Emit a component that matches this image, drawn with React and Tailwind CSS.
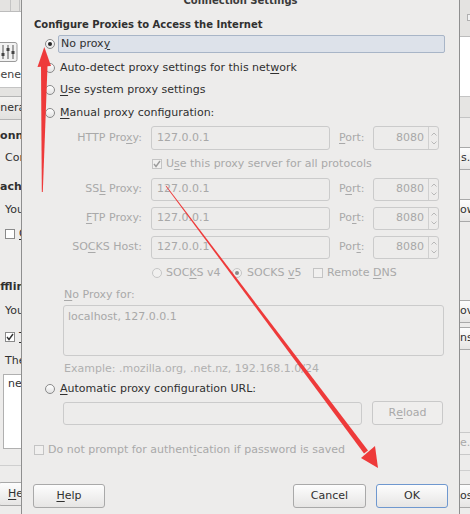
import React from 'react';

// mnemonic underline, like GTK labels
const U = ({ children }) => <span className="underline underline-offset-[2px]">{children}</span>;

const Radio = ({ checked, disabled }) => (
  <span
    className={`w-[10px] h-[10px] rounded-full border flex items-center justify-center shrink-0 ${
      disabled ? 'border-[#c6c6c6] bg-[#f1f0ef]' : 'border-[#8a8a8a] bg-linear-to-b from-white to-[#e2e2e2]'
    }`}
  >
    {checked && <span className={`w-[4px] h-[4px] rounded-full ${disabled ? 'bg-[#8c8c8c]' : 'bg-[#262626]'}`} />}
  </span>
);

const Checkbox = ({ checked, disabled }) => (
  <span
    className={`w-[10px] h-[10px] border flex items-center justify-center shrink-0 ${
      disabled ? 'border-[#c4c4c4] bg-[#f1f0ef]' : 'border-[#8a8a8a] bg-white'
    }`}
  >
    {checked && (
      <svg width="8" height="8" viewBox="0 0 8 8">
        <path d="M1 4 L3 6.5 L7 1" fill="none" stroke={disabled ? '#9c9c9c' : '#333'} strokeWidth="1.4" />
      </svg>
    )}
  </span>
);

const Spin = ({ className = 'h-[23px]' }) => (
  <div className={`w-[66px] border border-[#cbcbcb] rounded-[3px] flex text-[#a8a8a8] ${className}`}>
    <div className="flex-1 flex items-center justify-end pr-[4px]">8080</div>
    <div className="w-[10px] border-l border-[#d0d0d0] flex flex-col items-center justify-center gap-[5px]">
      <svg width="6" height="4" viewBox="0 0 6 4">
        <path d="M0.5 3.5 L3 1 L5.5 3.5" stroke="#b8b8b8" fill="none" />
      </svg>
      <svg width="6" height="4" viewBox="0 0 6 4">
        <path d="M0.5 0.5 L3 3 L5.5 0.5" stroke="#b8b8b8" fill="none" />
      </svg>
    </div>
  </div>
);

const ProxyRow = ({ label, port, className = '', h = 'h-[23px]' }) => (
  <div className={`flex items-center ${h} ${className}`}>
    <div className="w-[120px] text-right text-[#a9a9a9] whitespace-nowrap">{label}</div>
    <div className="ml-[9px] w-[179px] h-full border border-[#cbcbcb] rounded-[3px] pl-[5px] flex items-center text-[#a8a8a8]">
      127.0.0.1
    </div>
    <div className="ml-[9px] w-[34px] text-[#a9a9a9]">{port}</div>
    <Spin className="h-full" />
  </div>
);

const Button = ({ children, className = '', disabled, focus }) => (
  <div
    className={`h-[24px] rounded-[3px] border flex items-center justify-center ${
      disabled
        ? 'border-[#c9c9c9] bg-[#efeeed] text-[#a9a9a9]'
        : focus
        ? 'border-[#6f98cf] bg-linear-to-b from-[#fdfdfd] to-[#e6e5e4]'
        : 'border-[#a9a9a9] bg-linear-to-b from-[#fdfdfd] to-[#e6e5e4]'
    } ${className}`}
  >
    {children}
  </div>
);

const LeftStrip = () => (
  <div className="w-[21px] h-[514px] overflow-hidden flex flex-col shrink-0 bg-[#edeceb]">
    <div className="h-[12px] bg-[#e4e3e1] border-b border-[#bcbcbc] flex shrink-0">
      <div className="ml-[10px] w-[1px] bg-[#c4c4c4]" />
      <div className="ml-[8px] w-[1px] bg-[#c4c4c4]" />
    </div>
    <div className="h-[76px] bg-white border-b border-[#c4c4c4] flex flex-col shrink-0">
      <div className="mt-[30px] h-[20px]">
        <svg width="18" height="20" viewBox="0 0 18 20">
          <rect x="-3" y="0.5" width="20" height="19" rx="2" fill="#f2f2f2" stroke="#9a9a9a" />
          <path d="M3 3 V17 M8 3 V17 M13 3 V17" stroke="#555" strokeWidth="1" />
          <rect x="1.5" y="11" width="3" height="3" fill="#444" />
          <rect x="6.5" y="6" width="3" height="3" fill="#444" />
          <rect x="11.5" y="9" width="3" height="3" fill="#444" />
        </svg>
      </div>
      <div className="mt-[7px] ml-[-8px] h-[12px] leading-[12px] whitespace-nowrap text-[#404040]">General</div>
    </div>
    <div className="h-[8px] bg-[#e4e3e1] shrink-0" />
    <div className="h-[24px] bg-linear-to-b from-[#f3f2f1] to-[#e2e1df] border-y border-[#b5b5b5] flex items-center whitespace-nowrap ml-[-15px] shrink-0">
      General
    </div>
    <div className="mt-[7px] h-[18px] flex items-center ml-[-8px] font-bold whitespace-nowrap shrink-0">Connection</div>
    <div className="mt-[4px] h-[18px] flex items-center ml-[5px] whitespace-nowrap shrink-0">Configure</div>
    <div className="mt-[11px] h-[18px] flex items-center ml-[-8px] font-bold whitespace-nowrap shrink-0">Cache</div>
    <div className="mt-[5px] h-[18px] flex items-center ml-[5px] whitespace-nowrap shrink-0">Your</div>
    <div className="mt-[6px] h-[18px] flex items-center ml-[5px] gap-[4px] whitespace-nowrap shrink-0">
      <Checkbox />
      <U>O</U>
    </div>
    <div className="mt-[35px] h-[18px] flex items-center ml-[-9px] font-bold whitespace-nowrap shrink-0">Offline</div>
    <div className="mt-[6px] h-[18px] flex items-center ml-[5px] whitespace-nowrap shrink-0">Your</div>
    <div className="mt-[8px] h-[18px] flex items-center ml-[5px] gap-[4px] whitespace-nowrap shrink-0">
      <Checkbox checked />
      <U>T</U>
    </div>
    <div className="mt-[6px] h-[18px] flex items-center ml-[5px] whitespace-nowrap shrink-0">The</div>
    <div className="mt-[4px] h-[75px] ml-[3px] w-[40px] bg-white border border-[#b0b0b0] pl-[4px] pt-[1px] whitespace-nowrap shrink-0">
      net
    </div>
    <div className="mt-[16px] h-[1px] bg-[#cfcfcf] shrink-0" />
    <div className="mt-[16px] h-[24px] ml-[-2px] w-[60px] rounded-[3px] border border-[#a9a9a9] bg-linear-to-b from-[#fdfdfd] to-[#e6e5e4] flex items-center pl-[9px] shrink-0">
      <U>H</U>elp
    </div>
  </div>
);

const RightStrip = () => (
  <div className="w-[10px] h-[514px] overflow-hidden flex flex-col shrink-0 bg-[#edeceb] whitespace-nowrap">
    <div className="h-[37px] bg-[#e4e3e1] border-b border-[#bcbcbc] shrink-0 pt-[14px] pl-[7px]">
      <div className="w-[6px] h-[7px] border border-[#b0b0b0] bg-[#f2f2f2]" />
    </div>
    <div className="h-[60px] bg-white border-b border-[#c4c4c4] shrink-0" />
    <div className="h-[21px] bg-[#e6e5e3] border-b border-[#c4c4c4] shrink-0" />
    <div className="mt-[29px] h-[23px] border-y border-[#a9a9a9] bg-linear-to-b from-[#fdfdfd] to-[#e6e5e4] flex items-center pl-[1px] shrink-0">
      s...
    </div>
    <div className="mt-[29px] h-[23px] border-y border-[#a9a9a9] bg-linear-to-b from-[#fdfdfd] to-[#e6e5e4] flex items-center shrink-0">
      ow
    </div>
    <div className="mt-[78px] h-[23px] border-y border-[#a9a9a9] bg-linear-to-b from-[#fdfdfd] to-[#e6e5e4] flex items-center shrink-0">
      ov
    </div>
    <div className="mt-[4px] h-[23px] border-y border-[#a9a9a9] bg-linear-to-b from-[#fdfdfd] to-[#e6e5e4] flex items-center shrink-0">
      ns
    </div>
    <div className="mt-[82px] h-[23px] border-y border-[#c9c9c9] bg-[#efeeed] text-[#a9a9a9] flex items-center shrink-0">
      e...
    </div>
    <div className="mt-[15px] h-[1px] bg-[#cfcfcf] shrink-0" />
    <div className="mt-[13px] h-[24px] border-y border-[#a9a9a9] bg-linear-to-b from-[#fdfdfd] to-[#e6e5e4] flex items-center shrink-0">
      os
    </div>
  </div>
);

const App = () => {
  return (
    <div className="relative w-[470px] h-[514px] overflow-hidden flex font-['DejaVu_Sans',sans-serif] text-[11px] text-[#303030] bg-[#edeceb]">
      <LeftStrip />

      {/* Connection Settings dialog */}
      <div className="w-[439px] h-[514px] border-x border-[#8f8f8f] bg-[#edeceb] flex flex-col shrink-0">
        <div className="h-[14px] overflow-hidden flex justify-center shrink-0">
          <span className="mt-[-5px] h-[12px] leading-[12px] font-bold text-[10px] text-[#3a3a3a]">Connection Settings</span>
        </div>

        <div className="h-[20px] pl-[12px] flex items-center font-bold text-[10px] shrink-0">
          Configure Proxies to Access the Internet
        </div>

        <div className="mt-[1px] h-[18px] pl-[23px] flex items-center shrink-0">
          <Radio checked />
          <div className="ml-[3px] w-[387px] h-[18px] rounded-[2px] border border-[#a8b5c7] bg-[#dde2ea] pl-[2px] flex items-center">
            No prox<U>y</U>
          </div>
        </div>

        <div className="mt-[4px] h-[22px] pl-[23px] flex items-center gap-[5px] shrink-0">
          <Radio />
          <span>
            Auto-detect proxy settings for this net<U>w</U>ork
          </span>
        </div>
        <div className="h-[22px] pl-[23px] flex items-center gap-[5px] shrink-0">
          <Radio />
          <span>
            <U>U</U>se system proxy settings
          </span>
        </div>
        <div className="h-[24px] pl-[23px] flex items-center gap-[5px] shrink-0">
          <Radio />
          <span>
            <U>M</U>anual proxy configuration:
          </span>
        </div>

        <ProxyRow
          className="mt-[1px] shrink-0"
          h="h-[24px]"
          label={<>HTTP Pro<U>x</U>y:</>}
          port={<><U>P</U>ort:</>}
        />

        <div className="h-[28px] pl-[130px] flex items-center gap-[4px] text-[#a9a9a9] shrink-0">
          <Checkbox checked disabled />
          <span>
            U<U>s</U>e this proxy server for all protocols
          </span>
        </div>

        <ProxyRow className="shrink-0" label={<>SS<U>L</U> Proxy:</>} port={<>P<U>o</U>rt:</>} />
        <ProxyRow className="mt-[6px] shrink-0" label={<><U>F</U>TP Proxy:</>} port={<>Po<U>r</U>t:</>} />
        <ProxyRow className="mt-[6px] shrink-0" label={<>SO<U>C</U>KS Host:</>} port={<>Por<U>t</U>:</>} />

        <div className="mt-[2px] h-[24px] pl-[130px] flex items-center text-[#a9a9a9] shrink-0">
          <Radio disabled />
          <span className="ml-[4px] w-[66px]">
            SOC<U>K</U>S v4
          </span>
          <Radio checked disabled />
          <span className="ml-[5px] w-[66px]">
            SOCKS <U>v</U>5
          </span>
          <Checkbox disabled />
          <span className="ml-[4px]">
            Remote <U>D</U>NS
          </span>
        </div>

        <div className="h-[20px] pl-[42px] flex items-center text-[#a9a9a9] shrink-0">
          <span>
            <U>N</U>o Proxy for:
          </span>
        </div>
        <div className="ml-[41px] w-[381px] h-[51px] border border-[#cbcbcb] rounded-[3px] pl-[4px] pt-[3px] text-[#a8a8a8] shrink-0">
          localhost, 127.0.0.1
        </div>

        <div className="h-[26px] pl-[42px] flex items-center text-[#b0b0b0] shrink-0">
          Example: .mozilla.org, .net.nz, 192.168.1.0/24
        </div>

        <div className="h-[14px] pl-[23px] flex items-center gap-[5px] shrink-0">
          <Radio />
          <span>
            <U>A</U>utomatic proxy configuration URL:
          </span>
        </div>

        <div className="mt-[5px] h-[24px] pl-[41px] flex items-end shrink-0">
          <div className="w-[299px] h-[23px] border border-[#cbcbcb] rounded-[3px]" />
          <Button disabled className="ml-[10px] w-[71px]">
            R<U>e</U>load
          </Button>
        </div>

        <div className="mt-[15px] h-[20px] pl-[12px] flex items-center gap-[4px] text-[#a9a9a9] shrink-0">
          <Checkbox disabled />
          <span>
            Do not prompt for authent<U>i</U>cation if password is saved
          </span>
        </div>

        <div className="mt-[24px] h-[24px] px-[11px] flex items-center shrink-0">
          <Button className="w-[72px]">
            <span>
              <U>H</U>elp
            </span>
          </Button>
          <div className="flex-1" />
          <Button className="w-[73px]">Cancel</Button>
          <Button focus className="ml-[10px] w-[72px]">
            OK
          </Button>
        </div>
      </div>

      <RightStrip />

      {/* red annotation arrows drawn over the screenshot */}
      <svg className="absolute inset-0 pointer-events-none" width="470" height="514" viewBox="0 0 470 514">
        <polygon points="41,66 47.5,66 42.8,192 41.8,192" fill="#ee3a3a" />
        <polygon points="44.3,47 37.5,67 51,66" fill="#ee3a3a" />
        <polygon points="166.3,185.8 165.7,186.2 364,453.5 368,450.5" fill="#ee3a3a" />
        <polygon points="378,468 361,458 375,446" fill="#ee3a3a" />
      </svg>
    </div>
  );
};

export default App;
